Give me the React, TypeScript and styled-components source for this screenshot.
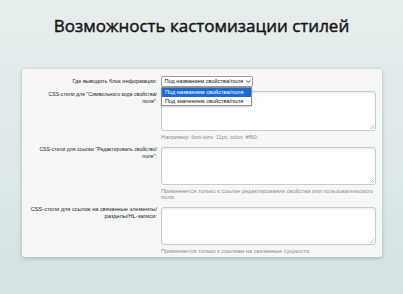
import React from 'react';
import styled, { createGlobalStyle } from 'styled-components';

const GlobalStyle = createGlobalStyle`
  html, body {
    margin: 0;
    padding: 0;
  }
  body {
    width: 403px;
    height: 294px;
    overflow: hidden;
    background: linear-gradient(180deg, #e6eded 0%, #dde8e8 60%, #d4e2e2 100%);
    font-family: "Liberation Sans", Arial, sans-serif;
  }
`;

const Page = styled.div`
  width: 403px;
  height: 294px;
  display: flex;
  flex-direction: column;
  align-items: flex-start;
`;

const Title = styled.h1`
  margin: 15px 0 0 0;
  width: 100%;
  text-align: center;
  font-family: "Open Sans", sans-serif;
  font-weight: 400;
  font-size: 17px;
  line-height: 22px;
  color: #151515;
  -webkit-text-stroke: 0.45px #151515;
`;

const Card = styled.div`
  margin: 32px 0 0 22px;
  width: 360px;
  box-sizing: border-box;
  padding: 7px 6px 3px 0;
  background: #f5f7f7;
  border-radius: 3px;
  box-shadow: 0 1px 4px rgba(0, 0, 0, 0.22);
  display: grid;
  grid-template-columns: 135px 1fr;
  column-gap: 4px;
`;

const Label = styled.div<{ $center?: boolean; $top?: number; $size?: number }>`
  font-size: ${p => p.$size ?? 5.55}px;
  line-height: 7px;
  color: #1e1e1e;
  text-align: right;
  white-space: nowrap;
  align-self: ${p => (p.$center ? 'center' : 'start')};
  margin-top: ${p => p.$top ?? 0}px;
`;

const Field = styled.div<{ $gap?: number }>`
  display: flex;
  flex-direction: column;
  margin-top: ${p => p.$gap ?? 0}px;
`;

const SelectWrap = styled.div`
  position: relative;
  width: 92px;
`;

const SelectBox = styled.div`
  height: 11px;
  box-sizing: border-box;
  border: 1px solid #9a9a9a;
  border-radius: 2px;
  background: #fff;
  font-size: 5.6px;
  line-height: 9px;
  color: #111;
  padding: 0 1.5px 0 2.5px;
  white-space: nowrap;
  display: flex;
  align-items: center;
  justify-content: space-between;

  svg {
    flex-shrink: 0;
  }
`;

const Dropdown = styled.div`
  position: absolute;
  left: 0;
  top: 11px;
  width: 91px;
  background: #fff;
  border: 1px solid #8f8f8f;
  box-sizing: border-box;
  box-shadow: 0 1px 2px rgba(0, 0, 0, 0.2);
  z-index: 2;
`;

const Option = styled.div<{ $active?: boolean }>`
  height: 8.5px;
  font-size: 5.6px;
  line-height: 8.5px;
  padding-left: 3px;
  white-space: nowrap;
  color: ${p => (p.$active ? '#fff' : '#111')};
  background: ${p => (p.$active ? '#1c6ad4' : '#fff')};
`;

const TextArea = styled.div<{ $h: number }>`
  height: ${p => p.$h}px;
  box-sizing: border-box;
  border: 1px solid #c7cbcb;
  border-radius: 3px;
  background: #fff;
  box-shadow: inset 0 1px 2px rgba(0, 0, 0, 0.08);
  position: relative;
`;

const Grip = styled.svg`
  position: absolute;
  right: 1px;
  bottom: 1px;
`;

const Hint = styled.div`
  margin-top: 3px;
  font-size: 5.72px;
  line-height: 6.5px;
  color: #8a8d8d;
  white-space: nowrap;
`;

const Chevron = () => (
  <svg width="5" height="5" viewBox="0 0 5 5">
    <path d="M0.6 1.4 L2.5 3.4 L4.4 1.4" fill="none" stroke="#333" strokeWidth="0.9" />
  </svg>
);

const Area: React.FC<{ h: number }> = ({ h }) => (
  <TextArea $h={h}>
    <Grip width="4" height="4" viewBox="0 0 4 4">
      <path d="M4 0 L0 4 M4 2 L2 4" stroke="#aaa" strokeWidth="0.6" />
    </Grip>
  </TextArea>
);

export default function App() {
  return (
    <Page>
      <GlobalStyle />
      <Title>Возможность кастомизации стилей</Title>
      <Card>
        <Label $center>Где выводить блок информации:</Label>
        <Field>
          <SelectWrap>
            <SelectBox>
              <span>Под названием свойства/поля</span>
              <Chevron />
            </SelectBox>
            <Dropdown>
              <Option $active>Под названием свойства/поля</Option>
              <Option>Под значением свойства/поля</Option>
            </Dropdown>
          </SelectWrap>
        </Field>

        <Label $top={4} $size={5.2}>CSS-стили для "Символьного кода свойства/<br />поля":</Label>
        <Field $gap={4}>
          <Area h={40} />
          <Hint>Например: font-size: 11pt; color: #f60;</Hint>
        </Field>

        <Label $top={5} $size={5.15}>CSS-стили для ссылки "Редактировать свойство/<br />поле":</Label>
        <Field $gap={6}>
          <Area h={38} />
          <Hint>
            Применяется только к ссылке редактирования свойства или пользовательского
            <br />
            поля.
          </Hint>
        </Field>

        <Label $top={5} $size={5.65}>CSS-стили для ссылок на связанные элементы/<br />разделы/HL-записи:</Label>
        <Field $gap={6}>
          <Area h={38} />
          <Hint>Применяется только к ссылкам на связанные сущности.</Hint>
        </Field>
      </Card>
    </Page>
  );
}
